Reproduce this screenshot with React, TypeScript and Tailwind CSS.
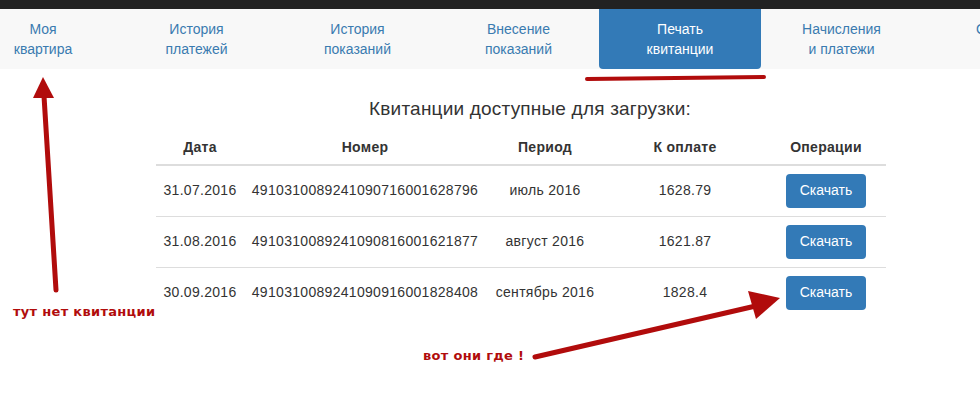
import React from "react";

const tabs = [
  { a: "История", b: "платежей" },
  { a: "История", b: "показаний" },
  { a: "Внесение", b: "показаний" },
  { a: "Печать", b: "квитанции", active: true },
  { a: "Начисления", b: "и платежи" },
];

const rows = [
  { date: "31.07.2016", num: "4910310089241090716001628796", period: "июль 2016", sum: "1628.79" },
  { date: "31.08.2016", num: "4910310089241090816001621877", period: "август 2016", sum: "1621.87" },
  { date: "30.09.2016", num: "4910310089241090916001828408", period: "сентябрь 2016", sum: "1828.4" },
];

export default function App() {
  return (
    <div className="relative h-[394px] w-[980px] overflow-hidden bg-white font-['Liberation_Sans',Arial,sans-serif] text-[14px] text-[#333]">
      {/* top bar */}
      <div className="h-[9px] bg-[#222]" />

      {/* tabs */}
      <div className="flex h-[60px] bg-[#f8f8f8] leading-[20px]">
        <div className="flex w-[86px] shrink-0 flex-col items-center pt-[10px] text-[#3a7bb0]">
          <span>Моя</span>
          <span>квартира</span>
        </div>
        <div className="w-[30px] shrink-0" />
        {tabs.map((t, i) => (
          <div
            key={i}
            className={
              t.active
                ? "flex w-[162px] shrink-0 flex-col items-center rounded-b-[4px] bg-[#337ab7] pt-[10px] text-white"
                : "flex w-[161px] shrink-0 flex-col items-center pt-[10px] text-[#3a7bb0]"
            }
          >
            <span>{t.a}</span>
            <span>{t.b}</span>
          </div>
        ))}
        <div className="shrink-0 whitespace-nowrap pl-[54px] pt-[10px] text-[#3a7bb0]">О</div>
      </div>

      {/* content */}
      <div className="ml-[156px] w-[730px]">
        <h3 className="mt-[29px] pl-[18px] text-center text-[19px] leading-[22px] tracking-[0.2px] text-[#333]">
          Квитанции доступные для загрузки:
        </h3>
        <table className="mt-[12px] w-[730px] table-fixed border-collapse text-center tracking-[0.3px]">
          <colgroup>
            <col className="w-[88px]" />
            <col className="w-[242px]" />
            <col className="w-[118px]" />
            <col className="w-[162px]" />
            <col className="w-[120px]" />
          </colgroup>
          <thead>
            <tr className="h-[33px] border-b-2 border-[#ddd] text-[14px] font-bold">
              <th className="pb-[2px]">Дата</th>
              <th className="pb-[2px]">Номер</th>
              <th className="pb-[2px]">Период</th>
              <th className="pb-[2px]">К оплате</th>
              <th className="pb-[2px]">Операции</th>
            </tr>
          </thead>
          <tbody>
            {rows.map((r) => (
              <tr key={r.date} className="h-[51px] border-b border-[#ddd] last:border-b-0">
                <td>{r.date}</td>
                <td>{r.num}</td>
                <td>{r.period}</td>
                <td>{r.sum}</td>
                <td>
                  <button className="h-[34px] w-[80px] rounded-[4px] bg-[#337ab7] text-[14px] tracking-normal text-white">
                    Скачать
                  </button>
                </td>
              </tr>
            ))}
          </tbody>
        </table>
      </div>

      {/* annotations */}
      <svg className="pointer-events-none absolute left-0 top-0" width="980" height="394">
        <g stroke="#b10c0c" strokeLinecap="round" fill="#b10c0c">
          <line x1="587" y1="79" x2="764" y2="77" strokeWidth="4" />
          <line x1="56" y1="290" x2="44" y2="96" strokeWidth="5" />
          <polygon points="43,77 54,98 33,98" stroke="none" />
          <line x1="535" y1="357" x2="760" y2="305" strokeWidth="5" />
          <polygon points="780,298 756,319 748,291" stroke="none" />
        </g>
      </svg>
      <div className="absolute left-[13px] top-[302px] font-['DejaVu_Sans',Verdana,sans-serif] text-[13px] font-bold tracking-[0.3px] text-[#b10c0c]">
        тут нет квитанции
      </div>
      <div className="absolute left-[423px] top-[346px] font-['DejaVu_Sans',Verdana,sans-serif] text-[13px] font-bold tracking-[0.3px] text-[#b10c0c]">
        вот они где !
      </div>
    </div>
  );
}
